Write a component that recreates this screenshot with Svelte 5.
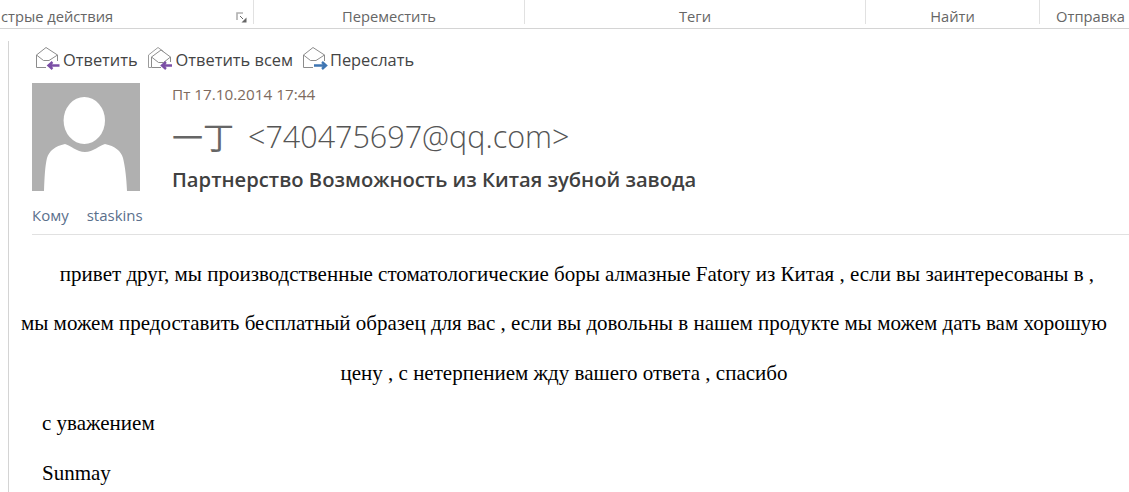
<script>
  // Окно письма: нижняя кромка ленты, шапка письма и текст.
  const groups = [
    { name: "Переместить", cls: "move" },
    { name: "Теги", cls: "tags" },
    { name: "Найти", cls: "find" },
    { name: "Отправка", cls: "send" },
  ];
  const actions = [
    { label: "Ответить", kind: "reply" },
    { label: "Ответить всем", kind: "all" },
    { label: "Переслать", kind: "forward" },
  ];
  const lines = [
    "привет друг, мы производственные стоматологические боры алмазные Fatory из Китая , если вы заинтересованы в ,",
    "мы можем предоставить бесплатный образец для вас , если вы довольны в нашем продукте мы можем дать вам хорошую",
    "цену , с нетерпением жду вашего ответа , спасибо",
  ];
</script>

<div class="ribbon">
  <div class="group quick">
    <span class="quick-label">стрые действия</span>
    <svg class="launcher" width="12" height="12" viewBox="0 0 12 12">
      <path d="M7 1H1v7" fill="none" stroke="#b0b0b0" stroke-width="1.6" />
      <path d="M4 4l3 3" stroke="#666" fill="none" />
      <path d="M10.5 5.5v5h-5z" fill="#666" />
    </svg>
  </div>
  {#each groups as g}
    <div class="group {g.cls}">{g.name}</div>
  {/each}
</div>

<div class="pane">
  <div class="actions">
    {#each actions as a}
      <div class="action">
        {#if a.kind === "all"}
          <svg width="27" height="26" viewBox="0 0 27 26">
            <path d="M1.5 18V9L11 1.5l5.5 4M1.5 18v3.5h2.5" fill="none" stroke="#9c9c9c" />
            <path d="M14 21.5H4.5V11L14 4l9.5 7v5" fill="none" stroke="#8c8c8c" />
            <path d="M4.5 11l7 5.5h5l7-5.5" fill="none" stroke="#8c8c8c" />
            <path d="M15 19.5h10M19 16l-4 3.5 4 3.5" fill="none" stroke="#7b4fa6" stroke-width="2.4" />
          </svg>
        {:else}
          <svg width="26" height="26" viewBox="0 0 26 26">
            <path d="M11 21.5H1.5V9L11 1.5 22.5 9v6" fill="none" stroke="#8c8c8c" />
            <path d="M1.5 9l7 5.5h5.5L22.5 9" fill="none" stroke="#8c8c8c" />
            {#if a.kind === "reply"}
              <path d="M14 19.5h10.5M17.5 16L13.5 19.5l4 3.5" fill="none" stroke="#7b4fa6" stroke-width="2.4" />
            {:else}
              <path d="M12 19.5h11M20 16l4 3.5-4 3.5" fill="none" stroke="#3f76b3" stroke-width="2.4" />
            {/if}
          </svg>
        {/if}
        <span>{a.label}</span>
      </div>
    {/each}
  </div>

  <div class="head">
    <div class="who">
      <svg class="avatar" width="108" height="108" viewBox="0 0 108 108">
        <rect width="108" height="108" fill="#b0b0b0" />
        <ellipse cx="52.3" cy="37.5" rx="20.7" ry="23.5" fill="#fff" />
        <path d="M12 108C12.5 95 13 83 15 75 17 68 23 63 33 61 38 62 45 69 53 69S68 62 73 61C83 63 89 68 91 75 93 83 94.5 95 95 108z" fill="#fff" />
      </svg>
      <div class="to"><span>Кому</span><span class="name">staskins</span></div>
    </div>
    <div class="meta">
      <div class="date">Пт 17.10.2014 17:44</div>
      <div class="from"><span class="cjk">一丁</span><span>&lt;740475697@qq.com&gt;</span></div>
      <div class="subject">Партнерство Возможность из Китая зубной завода</div>
    </div>
  </div>

  <div class="body">
    <p class="center first">{lines[0]}</p>
    <p class="center">{lines[1]}</p>
    <p class="center">{lines[2]}</p>
    <p class="left">с уважением</p>
    <p class="left">Sunmay</p>
  </div>
</div>

<style>
  :global(body) { margin: 0; background: #fff; overflow: hidden; }
  .ribbon { display: flex; height: 28px; border-bottom: 1px solid #d4d4d4; font: 14.7px "Open Sans", sans-serif; color: #666; overflow: hidden; }
  .group { height: 24px; line-height: 33px; text-align: center; border-left: 1px solid #e1e1e1; box-sizing: border-box; white-space: nowrap; flex: none; }
  .quick { width: 253px; border-left: 0; display: flex; justify-content: space-between; padding-right: 5px; }
  .quick-label { margin-left: 1px; }
  .launcher { margin-top: 12px; }
  .move { width: 271px; }
  .tags { width: 341px; }
  .find { width: 174px; }
  .send { width: 102px; }
  .pane { margin: 12px 0 0 8px; padding-left: 23px; border-left: 1px solid #d4d4d4; height: 452px; overflow: hidden; }
  .actions { display: flex; height: 42px; padding-left: 3px; gap: 9px; font: 16.4px "Open Sans", sans-serif; color: #444; }
  .action { display: flex; align-items: flex-start; gap: 2px; padding-top: 5px; height: 30px; }
  .action span { line-height: 26px; margin-top: 1px; }
  .head { display: flex; border-bottom: 1px solid #e1e1e1; height: 151px; }
  .who { width: 140px; flex: none; }
  .avatar { display: block; }
  .to { margin-top: 14px; font: 15px "Open Sans", sans-serif; color: #5a6f8c; display: flex; gap: 18px; }
  .meta { margin-top: 1px; }
  .date { font: 15.3px "Open Sans", sans-serif; color: #7d6a5e; line-height: 20px; }
  .from { display: flex; gap: 14px; font: 300 30.5px "Open Sans", sans-serif; color: #555; line-height: 40px; margin-top: 12px; white-space: nowrap; }
  .cjk { font: 31px/40px "Noto Sans CJK SC", sans-serif; color: #666; }
  .subject { font: 600 20.2px "Open Sans", sans-serif; color: #404040; line-height: 26px; margin-top: 10px; white-space: nowrap; }
  .body { margin-left: -31px; width: 1126px; font: 21px/25px "Liberation Serif", serif; color: #000; }
  .body p { margin: 0 0 25px; white-space: nowrap; }
  .center { text-align: center; }
  .first { margin-top: 27px !important; margin-bottom: 24px !important; text-indent: 26px; }
  .left { padding-left: 41px; }
</style>
